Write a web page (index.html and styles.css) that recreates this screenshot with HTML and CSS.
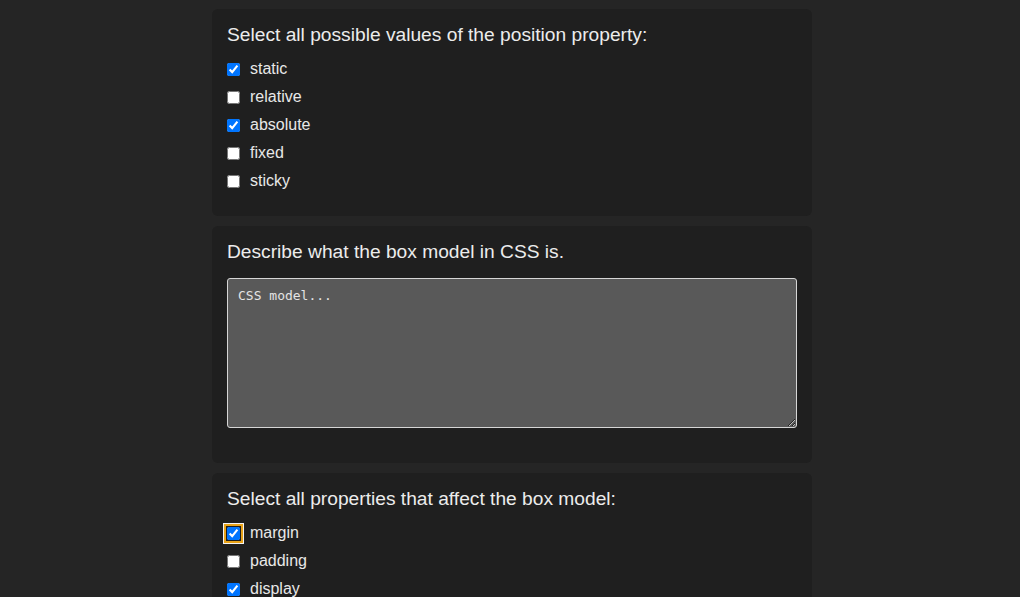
FILE: index.html
```html
<!DOCTYPE html>
<html lang="en">
<head>
<meta charset="utf-8">
<title>CSS Quiz</title>
<link rel="stylesheet" href="styles.css">
</head>
<body>
<main class="quiz">
  <section class="card">
    <h2 class="question">Select all possible values of the position property:</h2>
    <label class="option"><input type="checkbox" checked><span>static</span></label>
    <label class="option"><input type="checkbox"><span>relative</span></label>
    <label class="option"><input type="checkbox" checked><span>absolute</span></label>
    <label class="option"><input type="checkbox"><span>fixed</span></label>
    <label class="option"><input type="checkbox"><span>sticky</span></label>
  </section>
  <section class="card">
    <h2 class="question">Describe what the box model in CSS is.</h2>
    <textarea class="answer">CSS model...</textarea>
  </section>
  <section class="card">
    <h2 class="question">Select all properties that affect the box model:</h2>
    <label class="option"><input type="checkbox" class="focused" checked><span>margin</span></label>
    <label class="option"><input type="checkbox"><span>padding</span></label>
    <label class="option"><input type="checkbox" checked><span>display</span></label>
    <label class="option"><input type="checkbox"><span>border</span></label>
  </section>
</main>
</body>
</html>
```

FILE: styles.css
```css
html, body {
  margin: 0;
  padding: 0;
  background: #252525;
}

body {
  font-family: "Liberation Sans", Arial, sans-serif;
  color: #e8e8e8;
}

.quiz {
  width: 600px;
  margin: 0 auto;
  padding: 9px 0 20px 4px;
  display: flex;
  flex-direction: column;
  gap: 10px;
}

.card {
  background: #1f1f1f;
  border-radius: 6px;
  padding: 14px 15px 21px;
  display: flex;
  flex-direction: column;
}

.question {
  margin: 0 0 9px;
  font-size: 19.2px;
  font-weight: normal;
  line-height: 23px;
  color: #ececec;
}

.option {
  display: flex;
  align-items: center;
  height: 28px;
  font-size: 16px;
  color: #e8e8e8;
}

.option input {
  margin: 0 10px 0 0;
  width: 13px;
  height: 13px;
}

.option input.focused {
  outline: 2px solid #e9a318;
  outline-offset: 1px;
  box-shadow: 0 0 0 1px #1f1f1f, 0 0 0 4px #f4f4f4;
}

.answer {
  display: block;
  box-sizing: border-box;
  width: 570px;
  height: 150px;
  margin: 6px 0 14px;
  padding: 9px 10px;
  background: #595959;
  color: #e4e4e4;
  border: 1px solid #d6d6d6;
  border-radius: 3px;
  font-family: "DejaVu Sans Mono", monospace;
  font-size: 13px;
  line-height: 15px;
}
```
